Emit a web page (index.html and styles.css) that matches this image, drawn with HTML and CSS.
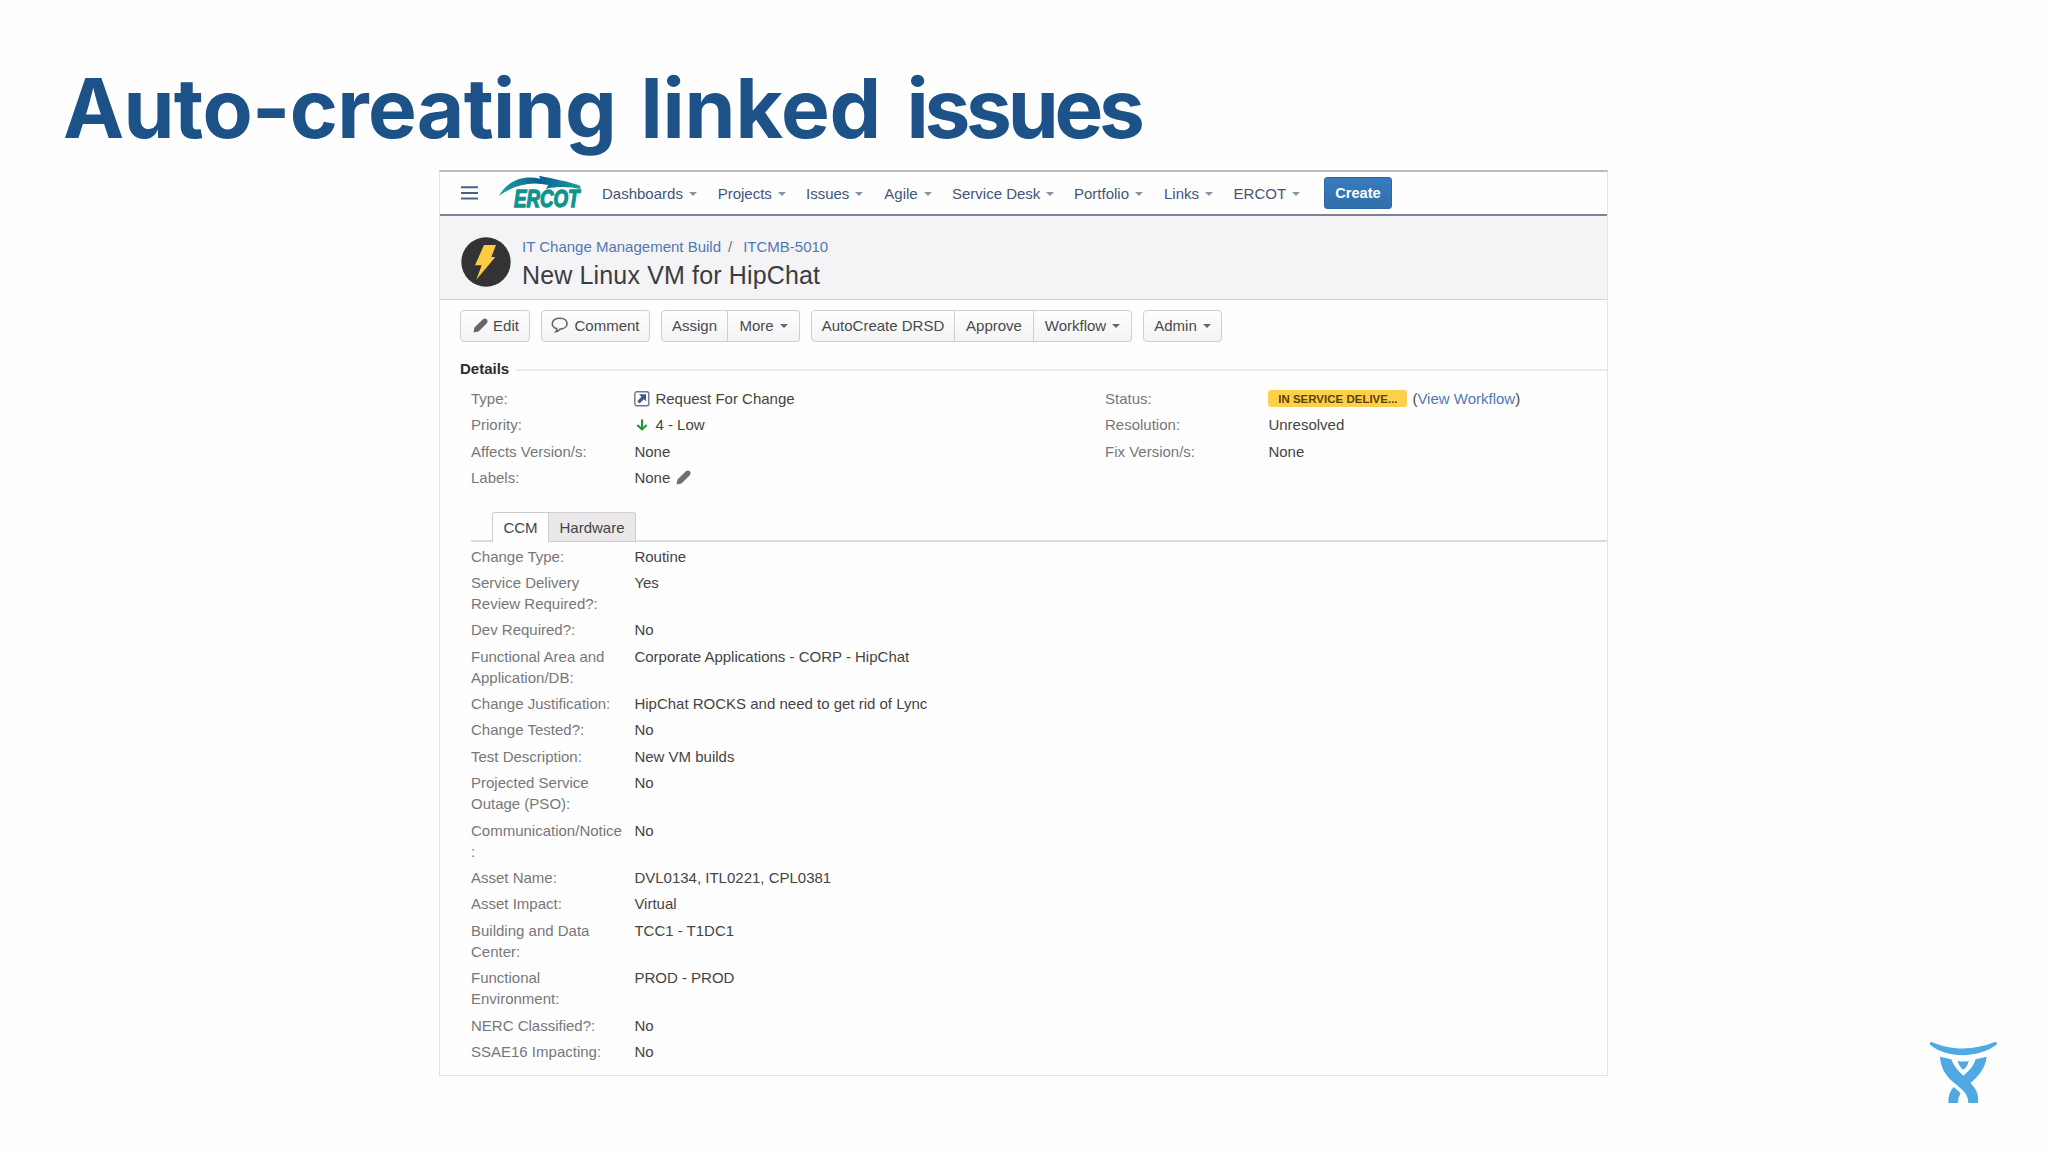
FILE: index.html
```html
<!DOCTYPE html>
<html lang="en">
<head>
    <meta charset="UTF-8">
    <meta name="viewport" content="width=device-width, initial-scale=1.0">
    <title>Auto-creating linked issues</title>
    <link rel="stylesheet" href="styles.css">
</head>
<body>
<h1 class="slide-title"><span class="word-auto">Auto-creating</span> <span class="word-linked">linked</span> <span class="word-issues">issues</span></h1>
<div class="panel">
    <nav class="navbar">
        <svg class="menu-icon" width="17" height="14" viewBox="0 0 17 14">
            <path d="M0 1.2h17M0 7h17M0 12.6h17" stroke="#46618c" stroke-width="2"/>
        </svg>
        <svg class="logo" width="100" height="44" viewBox="0 0 300 132">
            <defs>
                <linearGradient id="swoosh" x1="0" x2="1">
                    <stop offset="0" stop-color="#1aa3a3"/>
                    <stop offset=".5" stop-color="#0c5f90"/>
                    <stop offset="1" stop-color="#1ba0a0"/>
                </linearGradient>
            </defs>
            <path d="M24 71C50 26 95 9 148 20L144 11C190 20 235 29 268 41L268 52C240 45 205 42 165 50L172 39C120 27 70 38 24 71Z" fill="url(#swoosh)"/>
            <text x="69" y="106" class="logo-text" textLength="196" lengthAdjust="spacingAndGlyphs">ERCOT</text>
        </svg>
        <ul class="menu">
            <li>Dashboards</li>
            <li>Projects</li>
            <li>Issues</li>
            <li>Agile</li>
            <li>Service Desk</li>
            <li>Portfolio</li>
            <li>Links</li>
            <li>ERCOT</li>
        </ul>
        <button class="create">Create</button>
    </nav>
    <header class="issue-header">
        <svg class="avatar" width="50" height="50" viewBox="0 0 150 150">
            <circle cx="75" cy="75" r="74" fill="#333"/>
            <path d="M69 24H105L91 60H103L46 128L62 85H42Z" fill="#fccb43"/>
        </svg>
        <div>
            <div class="breadcrumb"><a>IT Change Management Build</a><i>/</i><a>ITCMB-5010</a></div>
            <h2>New Linux VM for HipChat</h2>
        </div>
    </header>
    <div class="toolbar">
        <div class="group">
            <button class="edit"><svg width="15" height="15" viewBox="0 0 15 15"><path d="M0.5 14.5L1.5 9.6L9.6 1.5Q12-.5 13.8 1.3T13.6 5.4L5.5 13.4Z" fill="#666"/></svg>Edit</button>
        </div>
        <div class="group">
            <button class="comment"><svg width="18" height="16" viewBox="0 0 18 16"><path d="M5 14.6Q6 13.5 5.7 11.6C-1 9.8-.2 1.2 9 1.2S18.6 11.8 9 12.1Q7.5 14.3 5 14.6Z" fill="none" stroke="#666" stroke-width="1.6"/></svg>Comment</button>
        </div>
        <div class="group">
            <button class="assign">Assign</button>
            <button class="more arrow">More</button>
        </div>
        <div class="group">
            <button class="autocreate">AutoCreate DRSD</button>
            <button class="approve">Approve</button>
            <button class="workflow arrow">Workflow</button>
        </div>
        <div class="group">
            <button class="admin arrow">Admin</button>
        </div>
    </div>
    <h3 class="details-title">Details</h3>
    <div class="details">
        <dl>
            <dt>Type:</dt>
            <dd><svg class="type-icon" width="16" height="16" viewBox="0 0 16 16"><rect x=".8" y=".8" width="14" height="14" rx="2" fill="#fff" stroke="#74777f" stroke-width="1.4"/><path d="M5 3.3h7v7L9.9 8.3L5.5 12.5L3.3 10.3L7.4 5.8Z" fill="#3b5f8a"/></svg>Request For Change</dd>
            <dt>Priority:</dt>
            <dd><svg class="type-icon" width="16" height="16" viewBox="0 0 16 16"><path d="M8 2.5V12.5M3.3 8L8 12.3L12.7 8" fill="none" stroke="#1f9434" stroke-width="2"/></svg>4 - Low</dd>
            <dt>Affects Version/s:</dt>
            <dd>None</dd>
            <dt>Labels:</dt>
            <dd>None<svg class="label-edit" width="15" height="15" viewBox="0 0 15 15"><path d="M0.5 14.5L1.5 9.6L9.6 1.5Q12-.5 13.8 1.3T13.6 5.4L5.5 13.4Z" fill="#707070"/></svg></dd>
        </dl>
        <dl>
            <dt>Status:</dt>
            <dd><span class="status">IN SERVICE DELIVE...</span>(<a>View Workflow</a>)</dd>
            <dt>Resolution:</dt>
            <dd>Unresolved</dd>
            <dt>Fix Version/s:</dt>
            <dd>None</dd>
        </dl>
    </div>
    <div class="tabs">
        <div class="tab active">CCM</div>
        <div class="tab">Hardware</div>
    </div>
    <dl class="fields">
        <dt>Change Type:</dt>
        <dd>Routine</dd>
        <dt>Service Delivery Review Required?:</dt>
        <dd>Yes</dd>
        <dt>Dev Required?:</dt>
        <dd>No</dd>
        <dt>Functional Area and Application/DB:</dt>
        <dd>Corporate Applications - CORP - HipChat</dd>
        <dt>Change Justification:</dt>
        <dd>HipChat ROCKS and need to get rid of Lync</dd>
        <dt>Change Tested?:</dt>
        <dd>No</dd>
        <dt>Test Description:</dt>
        <dd>New VM builds</dd>
        <dt>Projected Service Outage (PSO):</dt>
        <dd>No</dd>
        <dt>Communication/Notice<br>:</dt>
        <dd>No</dd>
        <dt>Asset Name:</dt>
        <dd>DVL0134, ITL0221, CPL0381</dd>
        <dt>Asset Impact:</dt>
        <dd>Virtual</dd>
        <dt>Building and Data Center:</dt>
        <dd>TCC1 - T1DC1</dd>
        <dt>Functional Environment:</dt>
        <dd>PROD - PROD</dd>
        <dt>NERC Classified?:</dt>
        <dd>No</dd>
        <dt>SSAE16 Impacting:</dt>
        <dd>No</dd>
    </dl>
</div>
<svg class="brand" width="120" height="100" viewBox="0 0 360 300">
    <g fill="#50a9e3">
        <path d="M96 66C150 92 225 92 284 66Q292 65 291 73C240 114 145 118 90 74Q88 65 96 66Z"/>
        <path d="M120 110L154 118C162 140 176 154 190 167C206 154 220 140 227 118L260 110C256 145 236 168 211 189C230 208 237 226 234 249H205C205 220 185 208 163 189C138 168 122 145 120 110Z"/>
        <path d="M173 123Q190 126 206 123Q204 138 190 149Q176 138 173 123Z"/>
        <path d="M161 201L182 219Q174 231 174 249H145Q143 220 161 201Z"/>
    </g>
</svg>
</body>
</html>
```

FILE: styles.css
```css
* {
    box-sizing: border-box;
}

body {
    margin: 0;
    height: 1152px;
    overflow: hidden;
    background-color: #fefefe;
    font-family: "Liberation Sans", Arial, sans-serif;
    font-size: 15px;
    color: #444;
}

.slide-title {
    margin: 0;
    padding: 59px 0 0 63px;
    height: 170px;
    font-family: Inter, sans-serif;
    font-size: 82px;
    font-weight: 700;
    line-height: 100px;
    color: #1c5288;
    white-space: nowrap;
}

.word-auto {
    letter-spacing: -0.7px;
}

.word-linked {
    margin-left: 5px;
    letter-spacing: -0.2px;
}

.word-issues {
    margin-left: 6px;
    letter-spacing: -4.3px;
}

.panel {
    width: 1169px;
    height: 906px;
    margin-left: 439px;
    border: 1px solid #e3e3e6;
    border-top: 2px solid #bbbcbe;
}

.navbar {
    display: flex;
    align-items: center;
    height: 44px;
    border-bottom: 2px solid #7d8296;
}

.menu-icon {
    margin-left: 21px;
}

.logo {
    margin: -3px 0 -4px 13px;
}

.logo-text {
    font: italic bold 70px "Liberation Sans", sans-serif;
    fill: #10938f;
    stroke: #10938f;
    stroke-width: 4;
}

.menu {
    display: grid;
    grid-template-columns: 115.7px 88.3px 78.3px 67.7px 122px 90px 69.6px 90.4px;
    list-style: none;
    margin: 0 0 0 11px;
    padding: 0;
    color: #445478;
}

.menu li::after,
.arrow::after {
    content: "";
    display: inline-block;
    margin-left: 6px;
    border: 4px solid transparent;
    border-top-color: #8791a8;
    border-bottom: 0;
    vertical-align: 3px;
}

.create {
    width: 68px;
    height: 32px;
    padding: 0;
    border: 1px solid #2c68a5;
    border-radius: 3px;
    background: linear-gradient(#387bc0, #3070ac);
    font: bold 14.6px "Liberation Sans", sans-serif;
    color: white;
}

.issue-header {
    display: flex;
    height: 84px;
    border-bottom: 1px solid #d4d4d7;
    background-color: #f4f3f6;
}

.avatar {
    margin: 21px 11px 0 21px;
}

.breadcrumb {
    margin-top: 21px;
    line-height: 20px;
}

.breadcrumb i {
    margin: 0 11px 0 7px;
    font-style: normal;
    color: #777;
}

a {
    color: #5278b3;
}

h2 {
    margin: 3px 0 0;
    font-size: 25px;
    font-weight: normal;
    line-height: 30px;
    letter-spacing: 0.15px;
    color: #3c3c3e;
}

.toolbar {
    display: flex;
    gap: 11px;
    padding: 10px 0 0 20px;
}

.group {
    display: flex;
}

.group button {
    height: 32px;
    padding: 0 0 1px;
    border: 1px solid #cfcfd2;
    border-left-width: 0;
    background: linear-gradient(#fefefe, #f3f2f5);
    font: 15px "Liberation Sans", sans-serif;
    color: #4a4a4c;
    white-space: nowrap;
}

.group button:first-child {
    border-left-width: 1px;
    border-radius: 4px 0 0 4px;
}

.group button:last-child {
    border-radius: 0 4px 4px 0;
}

.group button:only-child {
    border-radius: 4px;
}

.group svg {
    margin-right: 5px;
    vertical-align: -2px;
}

.group .arrow::after {
    border-top-color: #666;
}

.group .edit { width: 70px; padding-left: 2px; }
.comment { width: 109px; }
.assign { width: 67px; }
.more { width: 72px; }
.autocreate { width: 144px; }
.approve { width: 79px; }
.workflow { width: 98px; }
.admin { width: 79px; }

.details-title {
    display: flex;
    align-items: center;
    margin: 17px 0 0 20px;
    font-size: 15px;
    line-height: 20px;
    color: #2c2c30;
}

.details-title::after {
    content: "";
    flex: 1;
    height: 2px;
    margin: 2px 0 0 7px;
    background-color: #ebebec;
}

.details {
    display: grid;
    grid-template-columns: 634px 1fr;
    margin: 6.3px 0 0 31px;
}

dl {
    display: grid;
    grid-template-columns: 152px 1fr;
    column-gap: 11.4px;
    align-content: start;
    margin: 0;
    line-height: 21.1px;
}

dt,
dd {
    margin: 0;
    padding: 2.63px 0;
}

dt {
    color: #77777a;
}

.type-icon {
    margin-right: 5px;
    vertical-align: -3px;
}

.label-edit {
    margin-left: 6px;
    vertical-align: -2px;
}

.status {
    display: inline-block;
    width: 139px;
    height: 17px;
    margin-right: 5px;
    border-radius: 3px;
    background-color: #fdd04c;
    font-size: 11.5px;
    font-weight: bold;
    line-height: 18px;
    text-align: center;
    color: #594300;
    vertical-align: 1px;
}

.tabs {
    display: flex;
    height: 30px;
    margin: 21.7px 0 0 31px;
    padding-left: 21px;
    border-bottom: 2px solid #dddce0;
}

.tab {
    width: 87px;
    height: 30px;
    border: 1px solid #cdccd1;
    border-left: 0;
    border-radius: 0 3px 0 0;
    background-color: #eae8eb;
    line-height: 30px;
    text-align: center;
}

.tab.active {
    width: 57px;
    border-left: 1px solid #cdccd1;
    border-right: 1px solid #cdccd1;
    border-bottom: 0;
    border-radius: 3px 0 0 0;
    background-color: #fefefe;
}

.fields {
    margin: 0.6px 0 0 31px;
}

.brand {
    position: absolute;
    left: 1900px;
    top: 1020px;
}
```
